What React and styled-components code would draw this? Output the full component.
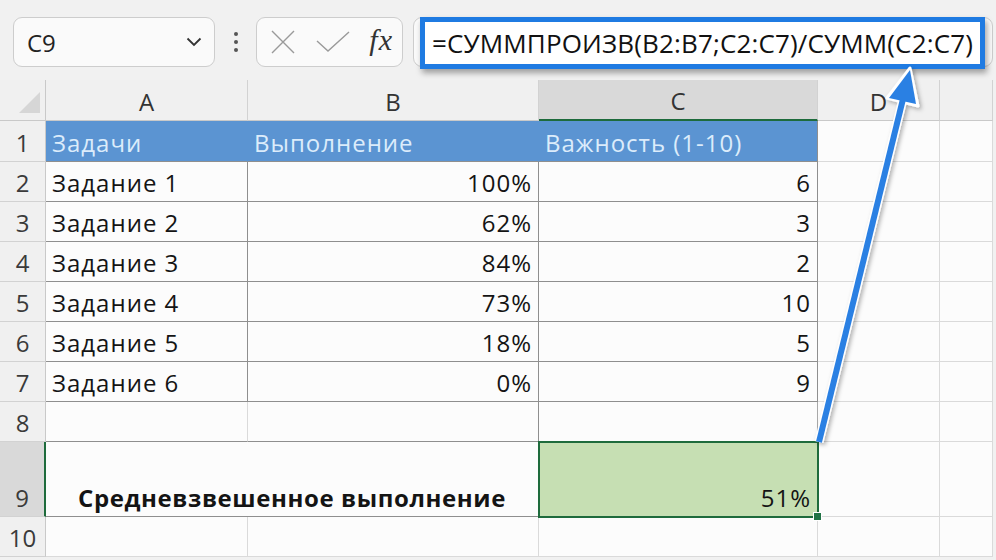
import React from "react";
import styled, { createGlobalStyle } from "styled-components";

const GlobalStyle = createGlobalStyle`
  html, body {
    margin: 0;
    padding: 0;
    background: #f1f1f1;
  }
  body {
    font-family: "Open Sans", "Noto Sans", sans-serif;
  }
`;

const GRID = "#dadada";
const TABLE = "#8f8f8f";
const HEAD_BG = "#f0f0f0";
const GREEN = "#1e6b3c";

const Page = styled.div`
  position: relative;
  width: 996px;
  height: 560px;
  overflow: hidden;
  background: #f1f1f1;
  color: #1a1a1a;
`;

const Toolbar = styled.div`
  display: flex;
  align-items: flex-start;
  height: 80px;
  box-sizing: border-box;
  padding: 17px 3px 0 13px;
`;

const Box = styled.div`
  box-sizing: border-box;
  height: 50px;
  border: 1px solid #cdcdcd;
  border-radius: 9px;
  background: #fafafa;
  display: flex;
  align-items: center;
`;

const NameBox = styled(Box)`
  width: 202px;
  justify-content: space-between;
  padding: 0 12px 0 13px;
  font-size: 24px;
  color: #222;
`;

const Dots = styled.div`
  width: 41px;
  height: 50px;
  display: flex;
  align-items: center;
  justify-content: center;
`;

const FxBox = styled(Box)`
  width: 147px;
  justify-content: space-between;
  padding: 0 9px 0 13px;
`;

const Fx = styled.span`
  font-family: "Liberation Serif", "DejaVu Serif", serif;
  font-style: italic;
  font-size: 30px;
  color: #333;
  letter-spacing: 1px;
  padding-bottom: 4px;
`;

const FormulaField = styled(Box)`
  position: relative;
  flex: 1;
  margin-left: 10px;
`;

const Highlight = styled.div`
  position: absolute;
  left: 6px;
  right: 7px;
  top: -1px;
  bottom: -3px;
  box-sizing: border-box;
  border: 5px solid #1f7be2;
  background: #fff;
  box-shadow: 2px 4px 6px rgba(0, 0, 0, 0.35);
  display: flex;
  align-items: center;
  padding-left: 7px;
  font-size: 26px;
  letter-spacing: 0.15px;
  color: #111;
  white-space: nowrap;
`;

const Sheet = styled.div`
  display: grid;
  grid-template-columns: 46px 202px 291px 279px 122px 53px;
  grid-template-rows: 41px 41px repeat(7, 40px) 75px 40px;
  width: 993px;
  background: #fcfcfc;
`;

const Corner = styled.div`
  position: relative;
  background: ${HEAD_BG};
  border-right: 1px solid #c9c9c9;
  border-bottom: 1px solid #c9c9c9;
`;

const ColHead = styled.div`
  box-sizing: border-box;
  display: flex;
  align-items: flex-end;
  justify-content: center;
  padding-bottom: 2px;
  background: ${(p) => (p.$active ? "#d9d9d9" : HEAD_BG)};
  border-right: 1px solid #d2d2d2;
  border-bottom: ${(p) => (p.$active ? `2px solid ${GREEN}` : "1px solid #c9c9c9")};
  font-size: 24px;
  color: #333;
`;

const RowHead = styled.div`
  box-sizing: border-box;
  display: flex;
  align-items: flex-end;
  justify-content: center;
  padding-bottom: 2px;
  background: ${(p) => (p.$active ? "#d9d9d9" : HEAD_BG)};
  border-right: ${(p) => (p.$active ? `2px solid ${GREEN}` : "1px solid #c9c9c9")};
  border-bottom: 1px solid #d2d2d2;
  font-size: 24px;
  color: #3a3a3a;
`;

const Cell = styled.div`
  position: relative;
  box-sizing: border-box;
  display: flex;
  align-items: flex-end;
  justify-content: ${(p) => p.$align || "flex-start"};
  padding: 0 6px 2px 6px;
  grid-column: ${(p) => (p.$span ? `span ${p.$span}` : "auto")};
  background: ${(p) => p.$bg || "transparent"};
  color: ${(p) => p.$color || "#141414"};
  border-right: 1px solid ${(p) => p.$right || GRID};
  border-bottom: 1px solid ${(p) => p.$bottom || GRID};
  font-size: 24px;
  font-weight: ${(p) => (p.$bold ? 700 : 400)};
  letter-spacing: ${(p) => (p.$bold ? "0.6px" : "1px")};
  white-space: nowrap;
`;

const Selected = styled(Cell)`
  background: #c6dfb3;
  outline: 2px solid ${GREEN};
  outline-offset: -1px;
  z-index: 1;

  &::after {
    content: "";
    position: absolute;
    right: -5px;
    bottom: -5px;
    width: 7px;
    height: 7px;
    background: #217346;
    border: 1px solid #fff;
  }
`;

const Arrow = styled.svg`
  position: absolute;
  left: 0;
  top: 0;
  pointer-events: none;
  z-index: 5;
`;

const columns = ["A", "B", "C", "D", ""];

const rows = [
  ["Задание 1", "100%", "6"],
  ["Задание 2", "62%", "3"],
  ["Задание 3", "84%", "2"],
  ["Задание 4", "73%", "10"],
  ["Задание 5", "18%", "5"],
  ["Задание 6", "0%", "9"],
];

export default function App() {
  return (
    <Page>
      <GlobalStyle />
      <Toolbar>
        <NameBox>
          <span>C9</span>
          <svg width="16" height="10" viewBox="0 0 16 10">
            <polyline points="1.5,1.5 8,8 14.5,1.5" fill="none" stroke="#333" strokeWidth="1.8" />
          </svg>
        </NameBox>
        <Dots>
          <svg width="6" height="22" viewBox="0 0 6 22">
            <circle cx="3" cy="3" r="2" fill="#555" />
            <circle cx="3" cy="11" r="2" fill="#555" />
            <circle cx="3" cy="19" r="2" fill="#555" />
          </svg>
        </Dots>
        <FxBox>
          <svg width="26" height="26" viewBox="0 0 26 26">
            <path d="M2 2 L24 24 M24 2 L2 24" stroke="#9a9a9a" strokeWidth="1.4" fill="none" />
          </svg>
          <svg width="34" height="22" viewBox="0 0 34 22">
            <polyline points="1,10 12,20 33,1" fill="none" stroke="#9a9a9a" strokeWidth="1.4" />
          </svg>
          <Fx>fx</Fx>
        </FxBox>
        <FormulaField>
          <Highlight>=СУММПРОИЗВ(B2:B7;C2:C7)/СУММ(C2:C7)</Highlight>
        </FormulaField>
      </Toolbar>

      <Sheet>
        <Corner>
          <svg width="46" height="41" viewBox="0 0 46 41">
            <polygon points="40,12 40,33 19,33" fill="#d6d6d6" />
          </svg>
        </Corner>
        {columns.map((c, i) => (
          <ColHead key={i} $active={c === "C"}>
            {c}
          </ColHead>
        ))}

        <RowHead>1</RowHead>
        <Cell $bg="#5b94d2" $color="#dcecfb" $right="#5b94d2" $bottom={TABLE}>
          Задачи
        </Cell>
        <Cell $bg="#5b94d2" $color="#dcecfb" $right="#5b94d2" $bottom={TABLE}>
          Выполнение
        </Cell>
        <Cell $bg="#5b94d2" $color="#dcecfb" $right={TABLE} $bottom={TABLE}>
          Важность (1-10)
        </Cell>
        <Cell />
        <Cell />

        {rows.map(([task, done, weight], i) => (
          <React.Fragment key={task}>
            <RowHead>{i + 2}</RowHead>
            <Cell $right={TABLE} $bottom={TABLE}>
              {task}
            </Cell>
            <Cell $align="flex-end" $right={TABLE} $bottom={TABLE}>
              {done}
            </Cell>
            <Cell $align="flex-end" $right={TABLE} $bottom={TABLE}>
              {weight}
            </Cell>
            <Cell />
            <Cell />
          </React.Fragment>
        ))}

        <RowHead>8</RowHead>
        <Cell $bottom={TABLE} />
        <Cell $right={TABLE} $bottom={TABLE} />
        <Cell $right="#a8a8a8" />
        <Cell />
        <Cell />

        <RowHead $active>9</RowHead>
        <Cell $span={2} $align="center" $bold $bottom={TABLE} $right={TABLE}>
          Средневзвешенное выполнение
        </Cell>
        <Selected $align="flex-end">51%</Selected>
        <Cell />
        <Cell />

        <RowHead>10</RowHead>
        <Cell />
        <Cell />
        <Cell />
        <Cell />
        <Cell />
      </Sheet>

      <Arrow width="996" height="560" viewBox="0 0 996 560">
        <defs>
          <filter id="shade" x="-20%" y="-20%" width="140%" height="140%">
            <feDropShadow dx="2" dy="2" stdDeviation="2" floodColor="#000" floodOpacity="0.3" />
          </filter>
        </defs>
        <g filter="url(#shade)">
          <line x1="819" y1="442" x2="903" y2="99" stroke="#fff" strokeWidth="9" />
          <polygon points="910,68 918,106 887,98" fill="#fff" stroke="#fff" strokeWidth="3" strokeLinejoin="round" />
          <line x1="819" y1="442" x2="903" y2="99" stroke="#2b80e3" strokeWidth="6" />
          <polygon points="910,70 916,104 889,98" fill="#2b80e3" />
        </g>
      </Arrow>
    </Page>
  );
}
